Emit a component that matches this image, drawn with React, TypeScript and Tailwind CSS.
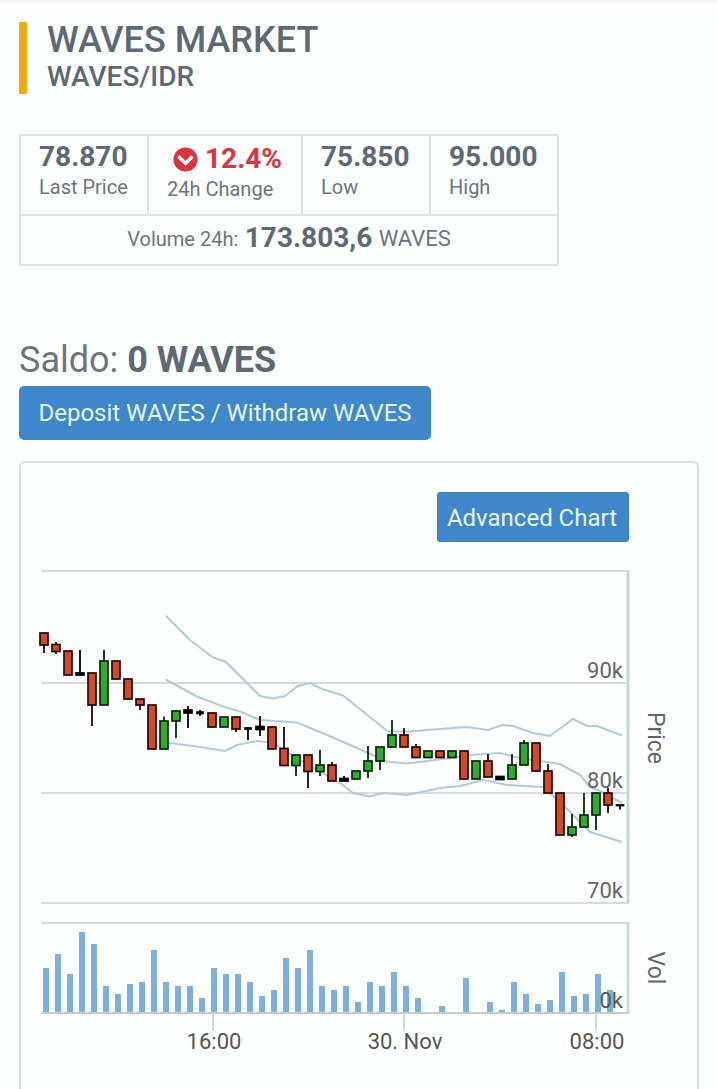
import React from "react";
import { FaChevronCircleDown } from "react-icons/fa";

type C = [number, number, number, number, string, number?];
// top, bottom, wickTop, wickBottom, colour, half width
const candles: C[] = [
  [633, 645, 633, 653, "r"],
  [644.5, 651.5, 642, 654, "r"],
  [651, 675, 651, 675, "r"],
  [673, 675, 650, 675, "k"],
  [673, 705, 673, 726, "r"],
  [661, 705, 650, 705, "g"],
  [661, 679, 661, 679, "r"],
  [679, 699, 679, 699, "r"],
  [699, 705, 699, 710, "r"],
  [705, 749, 705, 749, "r"],
  [721, 749, 716.5, 749, "g"],
  [711, 721, 711, 738, "g"],
  [710, 713, 706, 728, "k"],
  [712, 713.5, 710, 716, "k", 3],
  [713, 727, 713, 727, "r"],
  [717, 727, 717, 727, "g"],
  [717, 729, 717, 732, "r"],
  [728, 729, 727, 740, "k", 3],
  [726.5, 729.5, 716, 736, "k"],
  [727, 749, 727, 749, "r"],
  [748.5, 765.5, 727, 765.5, "r"],
  [755, 765.5, 755, 776, "g"],
  [755, 771.5, 755, 788, "r"],
  [765, 771.5, 750, 776, "g"],
  [765, 781, 762, 781, "r"],
  [778.5, 781, 776, 781, "k"],
  [771, 779, 771, 779, "g"],
  [761, 771, 746, 778, "g"],
  [747, 761, 747, 770, "g"],
  [735, 747, 720, 747, "g"],
  [735, 747, 728, 747, "r"],
  [747, 757.5, 744, 757.5, "r"],
  [751, 757.5, 751, 757.5, "g"],
  [751, 757.5, 751, 757.5, "r"],
  [751, 757.5, 751, 757.5, "g"],
  [751, 779, 751, 779, "r"],
  [761, 779, 761, 779, "g"],
  [761, 777, 754, 777, "r"],
  [776.5, 779.5, 776.5, 779.5, "k"],
  [765, 779, 754, 779, "g"],
  [743, 765, 740, 765, "g"],
  [743, 771, 743, 771, "r"],
  [771, 793, 764, 793, "r"],
  [793, 835, 793, 835, "r"],
  [827, 835, 814, 837, "g"],
  [815, 827, 793, 827, "g"],
  [793, 815, 793, 830, "g"],
  [793, 805, 788, 813, "r"],
  [805, 805.5, 805, 809.5, "k", 3.5],
];

const volumes: [number, number][] = [
  [46, 968], [58, 954], [70, 974], [82, 932], [94, 944], [106, 986], [118, 994], [130, 984],
  [142, 982], [154, 950], [166, 982], [178, 986], [190, 986], [202, 998], [214, 968], [226, 974],
  [238, 974], [250, 982], [262, 996], [274, 990], [286, 958], [298, 968], [310, 950], [322, 986],
  [334, 990], [346, 986], [358, 1002], [370, 982], [382, 986], [394, 972], [406, 986], [418, 998],
  [442, 1006], [466, 978], [490, 1002], [502, 1010], [514, 982], [526, 994], [538, 1004], [550, 1000],
  [562, 972], [574, 996], [586, 994], [598, 974], [610, 990],
];

const upper =
  "165.5,615.5 190,640 213,657.5 226,662 247,683 260,696 273,698.5 285,696 298,686 310,683 322,689 343,695.5 363,711.5 388,731.5 407,731.5 460,727.5 467,727 488,730 502,725 513,726 533,733 550,736 573,719 587,726 597,726 622,735.5";
const middle =
  "165.5,679.5 197,696.5 223,706.5 240,711.5 260,720 297,722.5 327,735 357,748 387,761.5 407,763.5 447,758.5 470,755 500,753 520,758 540,761 560,764 580,775 590,787 600,791 622,803";
const lower =
  "168,743 193,746 225,751 237,745 257,741 273,743 300,760 340,783 353,793 370,796.5 383,793 407,795 440,788 460,786 483,780 507,785 543,787 565,807 590,832 622,842";

const fills: Record<string, string> = { r: "#cd4a2b", g: "#35a832", k: "#000000" };
const strokes: Record<string, string> = { r: "#2a0505", g: "#06280a", k: "#000000" };

function Chart() {
  const font = "Roboto, sans-serif";
  return (
    <svg width="676" height="534" viewBox="21 555 676 534" className="block">
      {[571, 683, 793, 903, 923].map((y) => (
        <line key={y} x1="41" x2="629" y1={y} y2={y} stroke="#d8dcdf" strokeWidth="2" />
      ))}
      <line x1="628" x2="628" y1="571" y2="903" stroke="#c6d5e0" strokeWidth="3" />
      <line x1="628" x2="628" y1="923" y2="1013" stroke="#c6d5e0" strokeWidth="2.5" />

      <polyline points={upper} fill="none" stroke="#b2cbd9" strokeWidth="2" strokeLinejoin="round" />
      <polyline points={middle} fill="none" stroke="#b2cbd9" strokeWidth="2" strokeLinejoin="round" />
      <polyline points={lower} fill="none" stroke="#b2cbd9" strokeWidth="2" strokeLinejoin="round" />

      {candles.map(([t, b, wt, wb, c, hw], i) => {
        const x = 44 + i * 12;
        const h = hw ?? 4;
        return (
          <g key={i}>
            <line x1={x} x2={x} y1={wt} y2={wb} stroke={strokes[c]} strokeWidth="1.8" />
            <rect x={x - h} y={t} width={h * 2} height={b - t} fill={fills[c]} stroke={strokes[c]} strokeWidth="1.7" />
          </g>
        );
      })}

      {volumes.map(([x, y]) => (
        <rect key={x} x={x - 3} y={y} width="6" height={1013 - y} fill="#7db0da" />
      ))}
      <line x1="41" x2="629" y1="1013" y2="1013" stroke="#c3ccd2" strokeWidth="2" />
      {[213, 404, 596].map((x) => (
        <line key={x} x1={x} x2={x} y1="1013" y2="1031" stroke="#c3ccd2" strokeWidth="1.5" />
      ))}

      <g fontFamily={font} fontSize="22" fill="#666666" textAnchor="end">
        <text x="623" y="678">90k</text>
        <text x="623" y="788">80k</text>
        <text x="623" y="898">70k</text>
        <text x="623" y="1008" fill="#555555">0k</text>
      </g>
      <g fontFamily={font} fontSize="22" fill="#555555" textAnchor="middle">
        <text x="214" y="1049">16:00</text>
        <text x="405" y="1049">30. Nov</text>
        <text x="597" y="1049">08:00</text>
      </g>
      <g fontFamily={font} fill="#666666" textAnchor="middle">
        <text fontSize="23" transform="translate(648 738) rotate(90)">Price</text>
        <text fontSize="23" transform="translate(648 968) rotate(90)">Vol</text>
      </g>
    </svg>
  );
}

function Stat({ value, label, className }: { value: string; label: string; className: string }) {
  return (
    <div className={`pl-[18px] pt-[4px] ${className}`}>
      <div className="text-[28px] leading-[34px] font-bold text-[#5d6973]">{value}</div>
      <div className="text-[20px] leading-[26px] text-[#6c757d]">{label}</div>
    </div>
  );
}

export default function App() {
  return (
    <div className="h-[1089px] overflow-hidden bg-[#fdfefe] font-['Roboto',sans-serif]">
      <div className="h-[3px] bg-[#f6f6f6]" />
      <div className="pl-[19px]">
        <div className="mt-[19px] flex h-[72px] items-start">
          <div className="h-[72px] w-[8px] rounded-[1px] bg-[#f2a90f]" />
          <div className="ml-[20px]">
            <div className="text-[36px] leading-[36px] font-medium text-[#5d6973]">WAVES MARKET</div>
            <div className="mt-[3px] text-[28px] leading-[32px] font-medium text-[#5d6973]">WAVES/IDR</div>
          </div>
        </div>

        <div className="mt-[40px] h-[132px] w-[540px] border-2 border-[#dee2e5]">
          <div className="flex h-[80px] border-b-2 border-[#dee2e5]">
            <Stat value="78.870" label="Last Price" className="w-[128px] border-r-2 border-[#dee2e5]" />
            <div className="w-[154px] border-r-2 border-[#dee2e5] pt-[6px]">
              <div className="ml-[24px] flex h-[34px] items-center gap-[7px] text-[#d8363f]">
                <FaChevronCircleDown className="h-[25px] w-[25px]" />
                <span className="text-[28px] leading-[34px] font-bold">12.4%</span>
              </div>
              <div className="ml-[18px] text-[20px] leading-[26px] text-[#6c757d]">24h Change</div>
            </div>
            <Stat value="75.850" label="Low" className="w-[128px] border-r-2 border-[#dee2e5]" />
            <Stat value="95.000" label="High" className="w-[126px]" />
          </div>
          <div className="flex h-[48px] items-center justify-center gap-[6.5px] pb-[4px]">
            <span className="pt-[2px] text-[20px] text-[#6c757d]">Volume 24h:</span>
            <span className="text-[28px] font-bold text-[#5d6973]">173.803,6</span>
            <span className="pt-[1px] text-[22px] text-[#6c757d]">WAVES</span>
          </div>
        </div>

        <div className="mt-[71px] text-[36px] leading-[46px] text-[#6c757d]">
          Saldo: <span className="font-bold text-[#5d6973]">0 WAVES</span>
        </div>
        <button className="mt-[3px] block h-[54px] w-[412px] rounded-[5px] bg-[#3f87c8] text-[24px] text-[#e6f6fd]">
          Deposit WAVES / Withdraw WAVES
        </button>

        <div className="mt-[21px] h-[700px] w-[680px] rounded-[6px] border-2 border-[#dcdfe2]">
          <div className="flex justify-end pt-[29px] pr-[68px]">
            <button className="h-[50px] w-[192px] rounded-[3px] border border-[#3a7cb6] bg-[#3f87c8] pt-[1px] pr-[2px] text-[24px] text-[#e6f6fd]">
              Advanced Chart
            </button>
          </div>
          <div className="mt-[13px]">
            <Chart />
          </div>
        </div>
      </div>
    </div>
  );
}
